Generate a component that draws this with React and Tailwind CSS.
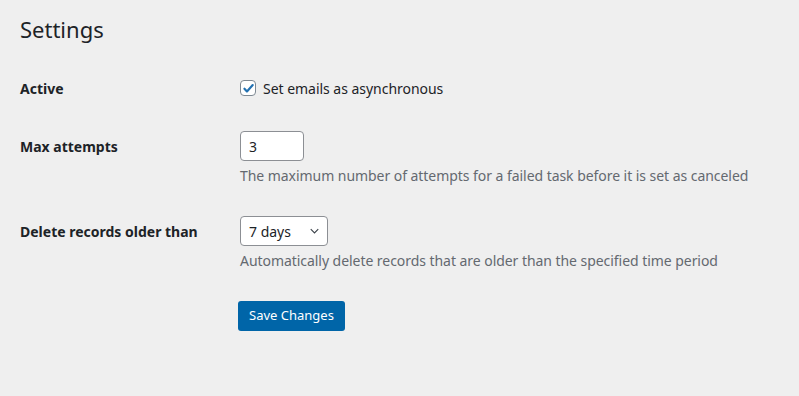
export default function App() {
  return (
    <div
      className="min-h-[396px] w-full bg-[#efefef] px-5 pt-[14px] text-[14px] text-[#1d2327]"
      style={{ fontFamily: '"Noto Sans", "Open Sans", sans-serif' }}
    >
      <h1 className="h-[30px] text-[22px] leading-[30px] font-normal">Settings</h1>

      <div className="mt-[28px] flex h-[32px] items-center">
        <div className="w-[220px] shrink-0 font-bold">Active</div>
        <label className="flex items-center gap-[7px]">
          <span className="flex h-4 w-4 items-center justify-center rounded-[4px] border border-[#7e8993] bg-white">
            <svg viewBox="0 0 16 16" className="h-[13px] w-[13px]">
              <path d="M3 8.3l3.1 3.3L13.2 3.8" fill="none" stroke="#2271b1" strokeWidth="2.7" strokeLinecap="round" strokeLinejoin="round" />
            </svg>
          </span>
          <span className="tracking-[-0.03px]">Set emails as asynchronous</span>
        </label>
      </div>

      <div className="mt-[27px] flex">
        <div className="flex h-[30px] w-[220px] shrink-0 items-center font-bold">Max attempts</div>
        <div className="flex flex-col items-start">
          <div className="flex h-[30px] w-[64px] items-center rounded-[4px] border border-[#8c8f94] bg-white px-2">3</div>
          <p className="mt-[5px] leading-[20px] tracking-[-0.05px] text-[#646970]">
            The maximum number of attempts for a failed task before it is set as canceled
          </p>
        </div>
      </div>

      <div className="mt-[30px] flex">
        <div className="flex h-[30px] w-[220px] shrink-0 items-center font-bold">Delete records older than</div>
        <div className="flex flex-col items-start">
          <div className="flex h-[30px] w-[88px] items-center justify-between rounded-[4px] border border-[#8c8f94] bg-white pl-2 pr-[8px]">
            <span>7 days</span>
            <svg viewBox="0 0 12 8" className="h-[6px] w-[9px]">
              <path d="M1 1.5l5 5 5-5" fill="none" stroke="#3c434a" strokeWidth="1.5" />
            </svg>
          </div>
          <p className="mt-[5px] leading-[20px] tracking-[-0.05px] text-[#646970]">
            Automatically delete records that are older than the specified time period
          </p>
        </div>
      </div>

      <div className="mt-[30px] pl-[218px]">
        <button className="h-[30px] rounded-[3px] bg-[#0065a8] px-[11px] text-[13px] text-white">
          Save Changes
        </button>
      </div>
    </div>
  );
}
